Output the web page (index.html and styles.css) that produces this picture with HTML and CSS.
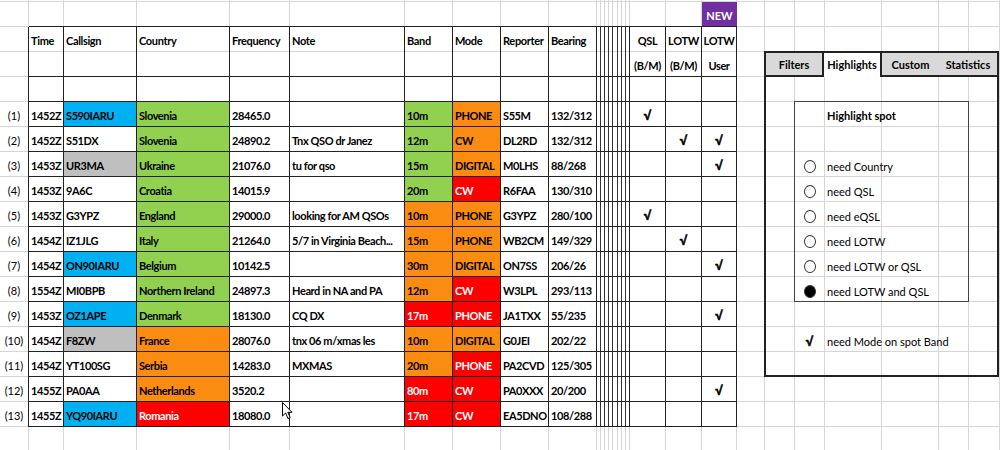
FILE: index.html
```html
<!DOCTYPE html>
<html lang="en">

<head>
    <meta charset="utf-8">
    <meta name="viewport" content="width=device-width, initial-scale=1.0">
    <title>DX SPOTS</title>
    <link rel="stylesheet" href="styles.css">
</head>

<body>
    <div class="sheet">

        <!--SPOT TABEL-->
        <div class="spots">
            <div class="num corner"></div>
            <div class="edge"></div>
            <div class="new">NEW</div>

            <div class="num"></div><div class="hd">Time</div><div class="hd">Callsign</div><div class="hd">Country</div><div class="hd">Frequency</div><div class="hd">Note</div><div class="hd">Band</div><div class="hd">Mode</div><div class="hd">Reporter</div><div class="hd">Bearing</div><div class="hd nb"></div><div class="hd ck">QSL</div><div class="hd ck">LOTW</div><div class="hd ck">LOTW</div>
            <div class="num"></div><div class="c"></div><div class="c"></div><div class="c"></div><div class="c"></div><div class="c"></div><div class="c"></div><div class="c"></div><div class="c"></div><div class="c"></div><div class="c nb"></div><div class="c ck">(B/M)</div><div class="c ck">(B/M)</div><div class="c ck">User</div>
            <div class="num"></div><div class="c"></div><div class="c"></div><div class="c"></div><div class="c"></div><div class="c"></div><div class="c"></div><div class="c"></div><div class="c"></div><div class="c"></div><div class="c nb"></div><div class="c"></div><div class="c"></div><div class="c"></div>

            <div class="num">(1)</div><div class="c">1452Z</div><div class="c blue">S590IARU</div><div class="c green">Slovenia</div><div class="c">28465.0</div><div class="c"></div><div class="c green">10m</div><div class="c orange">PHONE</div><div class="c">S55M</div><div class="c">132/312</div><div class="c nb"></div><div class="c ck"><span class="tick">√</span></div><div class="c ck"></div><div class="c ck"></div>
            <div class="num">(2)</div><div class="c">1452Z</div><div class="c">S51DX</div><div class="c green">Slovenia</div><div class="c">24890.2</div><div class="c">Tnx QSO dr Janez</div><div class="c green">12m</div><div class="c orange">CW</div><div class="c">DL2RD</div><div class="c">132/312</div><div class="c nb"></div><div class="c ck"></div><div class="c ck"><span class="tick">√</span></div><div class="c ck"><span class="tick">√</span></div>
            <div class="num">(3)</div><div class="c">1453Z</div><div class="c grey">UR3MA</div><div class="c green">Ukraine</div><div class="c">21076.0</div><div class="c">tu for qso</div><div class="c green">15m</div><div class="c orange">DIGITAL</div><div class="c">M0LHS</div><div class="c">88/268</div><div class="c nb"></div><div class="c ck"></div><div class="c ck"></div><div class="c ck"><span class="tick">√</span></div>
            <div class="num">(4)</div><div class="c">1453Z</div><div class="c">9A6C</div><div class="c green">Croatia</div><div class="c">14015.9</div><div class="c"></div><div class="c green">20m</div><div class="c red">CW</div><div class="c">R6FAA</div><div class="c">130/310</div><div class="c nb"></div><div class="c ck"></div><div class="c ck"></div><div class="c ck"></div>
            <div class="num">(5)</div><div class="c">1453Z</div><div class="c">G3YPZ</div><div class="c green">England</div><div class="c">29000.0</div><div class="c">looking for AM QSOs</div><div class="c orange">10m</div><div class="c orange">PHONE</div><div class="c">G3YPZ</div><div class="c">280/100</div><div class="c nb"></div><div class="c ck"><span class="tick">√</span></div><div class="c ck"></div><div class="c ck"></div>
            <div class="num">(6)</div><div class="c">1454Z</div><div class="c">IZ1JLG</div><div class="c green">Italy</div><div class="c">21264.0</div><div class="c">5/7 in Virginia Beach...</div><div class="c orange">15m</div><div class="c orange">PHONE</div><div class="c">WB2CM</div><div class="c">149/329</div><div class="c nb"></div><div class="c ck"></div><div class="c ck"><span class="tick">√</span></div><div class="c ck"></div>
            <div class="num">(7)</div><div class="c">1454Z</div><div class="c blue">ON90IARU</div><div class="c green">Belgium</div><div class="c">10142.5</div><div class="c"></div><div class="c orange">30m</div><div class="c orange">DIGITAL</div><div class="c">ON7SS</div><div class="c">206/26</div><div class="c nb"></div><div class="c ck"></div><div class="c ck"></div><div class="c ck"><span class="tick">√</span></div>
            <div class="num">(8)</div><div class="c">1554Z</div><div class="c">MI0BPB</div><div class="c green">Northern Ireland</div><div class="c">24897.3</div><div class="c">Heard in NA and PA</div><div class="c orange">12m</div><div class="c red">CW</div><div class="c">W3LPL</div><div class="c">293/113</div><div class="c nb"></div><div class="c ck"></div><div class="c ck"></div><div class="c ck"></div>
            <div class="num">(9)</div><div class="c">1453Z</div><div class="c blue">OZ1APE</div><div class="c green">Denmark</div><div class="c">18130.0</div><div class="c">CQ DX</div><div class="c red">17m</div><div class="c red">PHONE</div><div class="c">JA1TXX</div><div class="c">55/235</div><div class="c nb"></div><div class="c ck"></div><div class="c ck"></div><div class="c ck"><span class="tick">√</span></div>
            <div class="num">(10)</div><div class="c">1454Z</div><div class="c grey">F8ZW</div><div class="c orange">France</div><div class="c">28076.0</div><div class="c">tnx 06 m/xmas les</div><div class="c orange">10m</div><div class="c orange">DIGITAL</div><div class="c">G0JEI</div><div class="c">202/22</div><div class="c nb"></div><div class="c ck"></div><div class="c ck"></div><div class="c ck"></div>
            <div class="num">(11)</div><div class="c">1454Z</div><div class="c">YT100SG</div><div class="c orange">Serbia</div><div class="c">14283.0</div><div class="c">MXMAS</div><div class="c orange">20m</div><div class="c red">PHONE</div><div class="c">PA2CVD</div><div class="c">125/305</div><div class="c nb"></div><div class="c ck"></div><div class="c ck"></div><div class="c ck"></div>
            <div class="num">(12)</div><div class="c">1455Z</div><div class="c">PA0AA</div><div class="c orange">Netherlands</div><div class="c">3520.2</div><div class="c"></div><div class="c red">80m</div><div class="c red">CW</div><div class="c">PA0XXX</div><div class="c">20/200</div><div class="c nb"></div><div class="c ck"></div><div class="c ck"></div><div class="c ck"><span class="tick">√</span></div>
            <div class="num">(13)</div><div class="c">1455Z</div><div class="c blue">YQ90IARU</div><div class="c red">Romania</div><div class="c">18080.0</div><div class="c"></div><div class="c red">17m</div><div class="c red">CW</div><div class="c">EA5DNO</div><div class="c">108/288</div><div class="c nb"></div><div class="c ck"></div><div class="c ck"></div><div class="c ck"></div>
        </div>

        <!--PANEL MED FANER-->
        <div class="panel">
            <div class="tabs">
                <div class="tab filters">Filters</div>
                <div class="tab active">Highlights</div>
                <div class="tab custom">Custom</div>
                <div class="tab stats">Statistics</div>
            </div>
            <div class="panel-body">
                <div class="hl-box">
                    <div class="hl-title">Highlight spot</div>
                    <div class="hl-gap"></div>
                    <div class="opt"><span class="mark"><span class="radio"></span></span><span class="label">need Country</span></div>
                    <div class="opt"><span class="mark"><span class="radio"></span></span><span class="label">need QSL</span></div>
                    <div class="opt"><span class="mark"><span class="radio"></span></span><span class="label">need eQSL</span></div>
                    <div class="opt"><span class="mark"><span class="radio"></span></span><span class="label">need LOTW</span></div>
                    <div class="opt"><span class="mark"><span class="radio"></span></span><span class="label">need LOTW or QSL</span></div>
                    <div class="opt"><span class="mark"><span class="radio on"></span></span><span class="label">need LOTW and QSL</span></div>
                </div>
                <div class="opt mode"><span class="mark"><span class="tick">√</span></span><span class="label">need Mode on spot Band</span></div>
            </div>
        </div>

        <!--MUSEPIL-->
        <svg class="cursor" width="12" height="18" viewBox="0 0 12 18">
            <path d="M0.5 0.5 L0.5 14 L3.6 11 L6 16.5 L8.2 15.5 L5.8 10.3 L10 10.3 Z" fill="#fff" stroke="#000" stroke-width="1" stroke-linejoin="round" />
        </svg>
    </div>
</body>

</html>
```

FILE: styles.css
```css
/*GENERELT*/
* {
    margin: 0;
    padding: 0;
    box-sizing: border-box;
}

body {
    background: #fff;
    font-family: Lato, "Liberation Sans", sans-serif;
    font-size: 11px;
    color: #000;
}

/*REGNEARK MED GITTERLINJER*/
.sheet {
    position: relative;
    width: 1000px;
    height: 450px;
    overflow: hidden;
    display: flex;
    align-items: flex-start;
    padding-top: 2px;
    background-color: #fff;
    background-image:
        repeating-linear-gradient(to bottom, transparent 0 24px, #d6d6d6 24px 25px),
        linear-gradient(to right,
            transparent 28px, #d6d6d6 28px 29px, transparent 29px 63px, #d6d6d6 63px 64px,
            transparent 64px 136px, #d6d6d6 136px 137px, transparent 137px 229px, #d6d6d6 229px 230px,
            transparent 230px 289px, #d6d6d6 289px 290px, transparent 290px 404px, #d6d6d6 404px 405px,
            transparent 405px 452px, #d6d6d6 452px 453px, transparent 453px 500px, #d6d6d6 500px 501px,
            transparent 501px 548px, #d6d6d6 548px 549px, transparent 549px 596px, #d6d6d6 596px 597px,
            transparent 597px 600px, #d6d6d6 600px 601px, transparent 601px 604px, #d6d6d6 604px 605px,
            transparent 605px 608px, #d6d6d6 608px 609px, transparent 609px 612px, #d6d6d6 612px 613px,
            transparent 613px 617px, #d6d6d6 617px 618px, transparent 618px 621px, #d6d6d6 621px 622px,
            transparent 622px 625px, #d6d6d6 625px 626px, transparent 626px 629px, #d6d6d6 629px 630px,
            transparent 630px 665px, #d6d6d6 665px 666px, transparent 666px 701px, #d6d6d6 701px 702px,
            transparent 702px 736px, #d6d6d6 736px 737px, transparent 737px 764px, #d6d6d6 764px 765px,
            transparent 765px 794px, #d6d6d6 794px 795px, transparent 795px 824px, #d6d6d6 824px 825px,
            transparent 825px 881px, #d6d6d6 881px 882px, transparent 882px 938px, #d6d6d6 938px 939px,
            transparent 939px 968px, #d6d6d6 968px 969px, transparent 969px 999px, #d6d6d6 999px 1000px);
    background-position: 0 2px, 0 0;
}

/*SPOT TABEL*/
.spots {
    display: grid;
    grid-template-columns: 29px 35px 73px 93px 60px 115px 48px 48px 48px 48px 33px 36px 36px 35px;
    grid-auto-rows: 25px;
    flex-shrink: 0;
}

.spots > div {
    padding: 3px 0 0 2px;
    line-height: 22px;
    white-space: nowrap;
    overflow: hidden;
}

.c {
    font-weight: bold;
    letter-spacing: -0.4px;
    border-right: 1px solid #222;
    border-bottom: 1px solid #222;
}

.hd {
    font-weight: bold;
    letter-spacing: -0.35px;
    border-right: 1px solid #222;
}

.num {
    border-right: 1px solid #222;
    text-align: center;
    padding-right: 3px;
    padding-left: 0 !important;
}

.num.corner {
    border-right: none;
}

.edge {
    grid-column: span 12;
    border-bottom: 1px solid #222;
}

.new {
    background-color: #7030a0;
    color: #fff;
    font-weight: bold;
    text-align: center;
    padding-left: 0 !important;
    border-bottom: 1px solid #222;
}

.ck {
    text-align: center;
    padding-left: 0 !important;
}

/*SMALLE KOLONNER*/
.nb {
    background: linear-gradient(to right,
        transparent 3px, #333 3px 4px, transparent 4px 7px, #333 7px 8px,
        transparent 8px 11px, #333 11px 12px, transparent 12px 15px, #333 15px 16px,
        transparent 16px 20px, #333 20px 21px, transparent 21px 24px, #333 24px 25px,
        transparent 25px 28px, #333 28px 29px, transparent 29px);
}

/*FARVER*/
.blue {
    background-color: #00b0f0;
}

.grey {
    background-color: #bfbfbf;
}

.green {
    background-color: #92d050;
}

.orange {
    background-color: #fb8c12;
}

.red {
    background-color: #ff0000;
    color: #fff;
}

/*FLUEBEN*/
.tick {
    font-family: "Liberation Sans", sans-serif;
    font-weight: bold;
    font-size: 13px;
    letter-spacing: 0;
    -webkit-text-stroke: 0.6px #000;
}

/*PANEL MED FANER*/
.panel {
    width: 235px;
    margin: 49px 0 0 27px;
    flex-shrink: 0;
}

.tabs {
    display: flex;
    height: 26px;
}

.tab {
    height: 26px;
    background-color: #d9d9d9;
    border: 2px solid #222;
    font-weight: bold;
    text-align: center;
    line-height: 21px;
    padding-top: 1px;
}

.tab.filters {
    width: 60px;
}

.tab.active {
    width: 58px;
    background-color: #fff;
    border-left: none;
    border-bottom: none;
}

.tab.custom {
    width: 57px;
    border-left: none;
    border-right: none;
}

.tab.stats {
    width: 60px;
    border-left: none;
}

.panel-body {
    height: 300px;
    border: 2px solid #222;
    border-top: none;
    padding: 24px 0 0 28px;
}

.hl-box {
    width: 175px;
    height: 201px;
    border: 1px solid #444;
    display: grid;
    grid-template-columns: 29px 1fr;
    grid-auto-rows: 25px;
    align-content: start;
}

.hl-title {
    grid-column: 2;
    font-weight: bold;
    padding: 3px 0 0 3px;
    line-height: 22px;
}

.hl-gap {
    grid-column: 1 / -1;
}

.opt {
    grid-column: 1 / -1;
    display: flex;
    align-items: center;
    padding-top: 3px;
    white-space: nowrap;
}

.opt .mark {
    width: 29px;
    display: flex;
    justify-content: center;
}

.opt .label {
    padding-left: 3px;
}

.radio {
    width: 12px;
    height: 13px;
    border: 1px solid #333;
    border-radius: 50%;
    background-color: #fff;
}

.radio.on {
    background-color: #000;
}

.opt.mode {
    width: 175px;
    height: 25px;
    margin: 25px 0 0 1px;
}

/*MUSEPIL*/
.cursor {
    position: absolute;
    left: 282px;
    top: 402px;
}
```
